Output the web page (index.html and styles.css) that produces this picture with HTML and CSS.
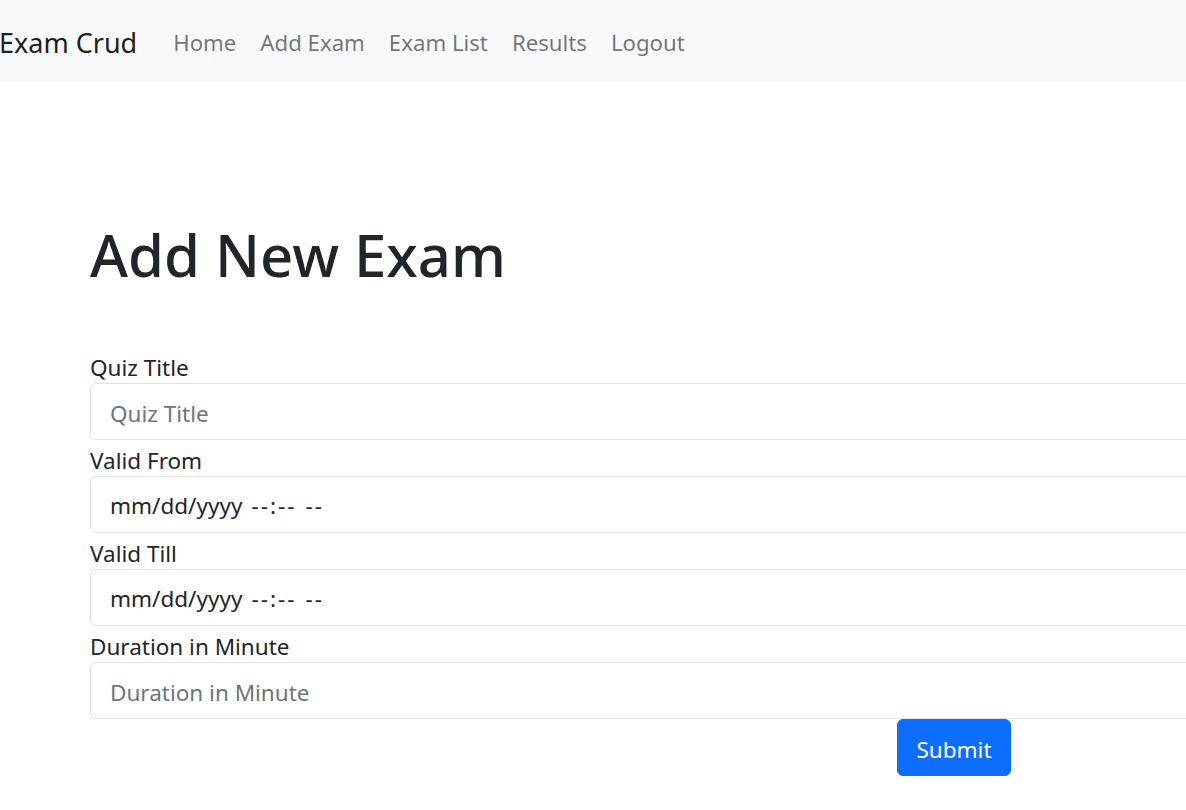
FILE: index.html
```html
<!DOCTYPE html>
<html lang="en">
<head>
<meta charset="utf-8">
<title>Exam Crud</title>
<link rel="stylesheet" href="styles.css">
</head>
<body>
<nav class="navbar">
  <a class="brand" href="#">Exam Crud</a>
  <ul class="nav">
    <li><a href="#">Home</a></li>
    <li><a href="#">Add Exam</a></li>
    <li><a href="#">Exam List</a></li>
    <li><a href="#">Results</a></li>
    <li><a href="#">Logout</a></li>
  </ul>
</nav>
<main class="page">
  <h1 class="title">Add New Exam</h1>
  <form class="form">
    <label class="label" for="t">Quiz Title</label>
    <input class="control" id="t" type="text" placeholder="Quiz Title">
    <label class="label">Valid From</label>
    <div class="control fake"><span>mm/dd/yyyy</span><span class="seg">--:--</span><span class="seg">--</span></div>
    <label class="label">Valid Till</label>
    <div class="control fake"><span>mm/dd/yyyy</span><span class="seg">--:--</span><span class="seg">--</span></div>
    <label class="label" for="d">Duration in Minute</label>
    <input class="control" id="d" type="text" placeholder="Duration in Minute">
    <div class="actions"><button class="btn" type="button">Submit</button></div>
  </form>
</main>
</body>
</html>
```
FILE: styles.css
```css
html, body {
  margin: 0;
  padding: 0;
  overflow: hidden;
  background: #fff;
}
body {
  font-family: "Noto Sans", "Open Sans", "Liberation Sans", sans-serif;
  color: #212529;
  font-size: 22.5px;
}
.navbar {
  height: 82px;
  box-sizing: border-box;
  padding-top: 2px;
  background: #f8f9fa;
  display: flex;
  align-items: center;
}
.brand {
  font-size: 27px;
  color: rgba(0,0,0,0.9);
  text-decoration: none;
  margin-right: 36px;
  margin-left: -1px;
}
.nav {
  list-style: none;
  display: flex;
  margin: 0;
  padding: 0;
  gap: 24px;
}
.nav a {
  color: rgba(0,0,0,0.55);
  text-decoration: none;
  font-size: 22.2px;
}
.page {
  padding-left: 90px;
}
.title {
  margin: 0;
  padding-top: 137px;
  font-size: 58px;
  font-weight: 500;
  line-height: 72px;
  padding-bottom: 56px;
}
.form {
  width: 1728px;
}
.label {
  display: block;
  box-sizing: border-box;
  height: 36px;
  padding-top: 3px;
  line-height: 35px;
}
.control {
  display: block;
  box-sizing: border-box;
  width: 100%;
  height: 57px;
  border: 1px solid #dee2e6;
  border-radius: 6px;
  padding: 3px 19px 0;
  font: inherit;
  font-size: 22.5px;
  line-height: 52px;
  color: #212529;
  background: #fff;
  margin: 0;
}
.control::placeholder {
  color: #6c757d;
}
.fake .seg {
  margin-left: 9px;
  letter-spacing: 2px;
}
.actions {
  text-align: center;
}
.btn {
  font: inherit;
  font-size: 22.5px;
  background: #0d6efd;
  color: #fff;
  border: 1px solid #0d6efd;
  border-radius: 6px;
  height: 57px;
  width: 114px;
  padding: 4px 0 0;
}
```
